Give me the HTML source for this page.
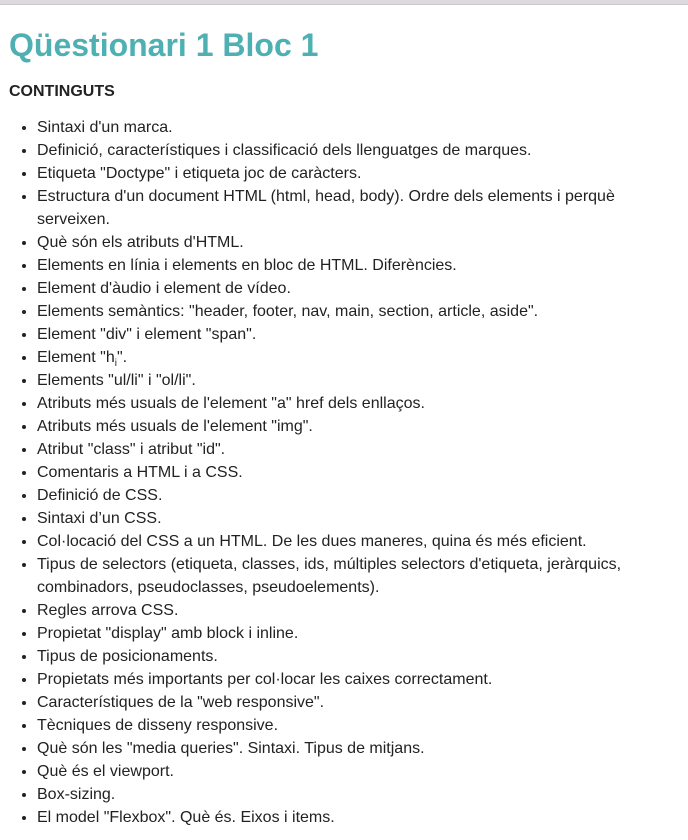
<!DOCTYPE html>
<html><head><meta charset="utf-8"><style>
body{margin:0;background:#fff;font-family:"Liberation Sans",Arial,sans-serif;color:#222;}
.top{height:4px;background:#dcdade;border-bottom:1px solid #c9c7cb;}
h1{margin:0;position:absolute;left:9px;top:25px;font-size:32px;line-height:40px;color:#4fb0b4;font-weight:bold;}
h2{margin:0;position:absolute;left:9px;top:82px;font-size:16px;line-height:20px;font-weight:bold;color:#222;}
ul{position:absolute;left:0;top:116px;margin:0;padding-left:37px;width:595px;font-size:16px;line-height:23px;color:#222;}
sub{font-size:10px;line-height:0;}
</style></head><body>
<div class="top"></div>
<h1>Qüestionari 1 Bloc 1</h1>
<h2>CONTINGUTS</h2>
<ul>
<li>Sintaxi d'un marca.</li>
<li>Definició, característiques i classificació dels llenguatges de marques.</li>
<li>Etiqueta "Doctype" i etiqueta joc de caràcters.</li>
<li>Estructura d'un document HTML (html, head, body). Ordre dels elements i perquè serveixen.</li>
<li>Què són els atributs d'HTML.</li>
<li>Elements en línia i elements en bloc de HTML. Diferències.</li>
<li>Element d'àudio i element de vídeo.</li>
<li>Elements semàntics: "header, footer, nav, main, section, article, aside".</li>
<li>Element "div" i element "span".</li>
<li>Element "h<sub>i</sub>".</li>
<li>Elements "ul/li" i "ol/li".</li>
<li>Atributs més usuals de l'element "a" href dels enllaços.</li>
<li>Atributs més usuals de l'element "img".</li>
<li>Atribut "class" i atribut "id".</li>
<li>Comentaris a HTML i a CSS.</li>
<li>Definició de CSS.</li>
<li>Sintaxi d’un CSS.</li>
<li>Col·locació del CSS a un HTML. De les dues maneres, quina és més eficient.</li>
<li>Tipus de selectors (etiqueta, classes, ids, múltiples selectors d'etiqueta, jeràrquics, combinadors, pseudoclasses, pseudoelements).</li>
<li>Regles arrova CSS.</li>
<li>Propietat "display" amb block i inline.</li>
<li>Tipus de posicionaments.</li>
<li>Propietats més importants per col·locar les caixes correctament.</li>
<li>Característiques de la "web responsive".</li>
<li>Tècniques de disseny responsive.</li>
<li>Què són les "media queries". Sintaxi. Tipus de mitjans.</li>
<li>Què és el viewport.</li>
<li>Box-sizing.</li>
<li>El model "Flexbox". Què és. Eixos i items.</li>
</ul>
</body></html>
